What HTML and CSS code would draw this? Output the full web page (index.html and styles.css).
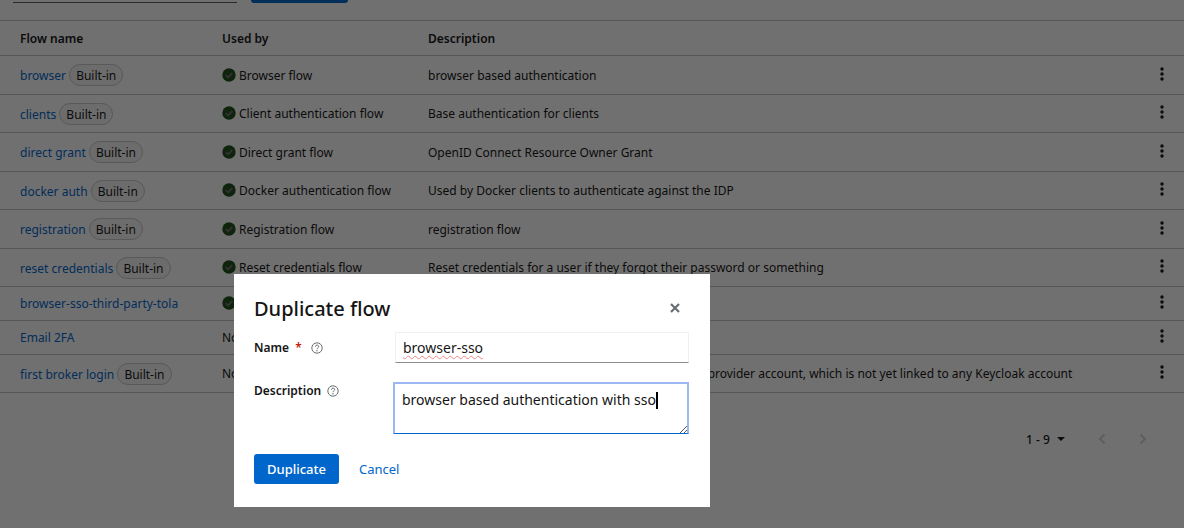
FILE: index.html
```html
<!DOCTYPE html>
<html lang="en">
<head>
    <meta charset="UTF-8">
    <meta name="viewport" content="width=device-width, initial-scale=1.0">
    <title>Authentication flows</title>
    <link rel="stylesheet" href="styles.css">
</head>
<body>
    <svg class="icon-defs" width="0" height="0">
        <symbol id="check" viewBox="0 0 14 14">
            <circle cx="7" cy="7" r="6.7" fill="#1e4f18"/>
            <path d="M3.8 7.2l2.3 2.3 4.2-4.4" fill="none" stroke="#6f6f6f" stroke-width="1.9"/>
        </symbol>
        <symbol id="kebab" viewBox="0 0 4 14">
            <circle cx="2" cy="2" r="1.7"/>
            <circle cx="2" cy="7" r="1.7"/>
            <circle cx="2" cy="12" r="1.7"/>
        </symbol>
        <symbol id="help" viewBox="0 0 12 12">
            <circle cx="6" cy="6" r="5.2" fill="none" stroke="currentColor" stroke-width="1"/>
            <path d="M4.4 4.7c0-2.1 3.3-2.1 3.3-.1 0 1.3-1.7 1.2-1.7 2.6" fill="none" stroke="currentColor" stroke-width="1"/>
            <circle cx="6" cy="8.8" r=".7" fill="currentColor"/>
        </symbol>
    </svg>

    <div class="toolbar">
        <div class="search"></div>
        <div class="create"></div>
    </div>

    <table class="flows">
        <thead>
            <tr>
                <th class="col-name">Flow name</th>
                <th class="col-used">Used by</th>
                <th>Description</th>
                <th class="col-action"></th>
            </tr>
        </thead>
        <tbody>
            <tr class="r39">
                <td><a href="#">browser</a> <span class="pill">Built-in</span></td>
                <td><svg class="check"><use href="#check"/></svg>Browser flow</td>
                <td>browser based authentication</td>
                <td class="col-action"><svg class="kebab"><use href="#kebab"/></svg></td>
            </tr>
            <tr class="r38">
                <td><a href="#">clients</a> <span class="pill">Built-in</span></td>
                <td><svg class="check"><use href="#check"/></svg>Client authentication flow</td>
                <td>Base authentication for clients</td>
                <td class="col-action"><svg class="kebab"><use href="#kebab"/></svg></td>
            </tr>
            <tr class="r39">
                <td><a href="#">direct grant</a> <span class="pill">Built-in</span></td>
                <td><svg class="check"><use href="#check"/></svg>Direct grant flow</td>
                <td>OpenID Connect Resource Owner Grant</td>
                <td class="col-action"><svg class="kebab"><use href="#kebab"/></svg></td>
            </tr>
            <tr class="r38">
                <td><a href="#">docker auth</a> <span class="pill">Built-in</span></td>
                <td><svg class="check"><use href="#check"/></svg>Docker authentication flow</td>
                <td>Used by Docker clients to authenticate against the IDP</td>
                <td class="col-action"><svg class="kebab"><use href="#kebab"/></svg></td>
            </tr>
            <tr class="r39">
                <td><a href="#">registration</a> <span class="pill">Built-in</span></td>
                <td><svg class="check"><use href="#check"/></svg>Registration flow</td>
                <td>registration flow</td>
                <td class="col-action"><svg class="kebab"><use href="#kebab"/></svg></td>
            </tr>
            <tr class="r38">
                <td><a href="#">reset credentials</a> <span class="pill">Built-in</span></td>
                <td><svg class="check"><use href="#check"/></svg>Reset credentials flow</td>
                <td>Reset credentials for a user if they forgot their password or something</td>
                <td class="col-action"><svg class="kebab"><use href="#kebab"/></svg></td>
            </tr>
            <tr class="r34">
                <td><a href="#">browser-sso-third-party-tola</a></td>
                <td><svg class="check"><use href="#check"/></svg>Browser flow</td>
                <td>browser based authentication</td>
                <td class="col-action"><svg class="kebab"><use href="#kebab"/></svg></td>
            </tr>
            <tr class="r34">
                <td><a href="#">Email 2FA</a></td>
                <td>Not in use</td>
                <td>Email based second factor</td>
                <td class="col-action"><svg class="kebab"><use href="#kebab"/></svg></td>
            </tr>
            <tr class="r38">
                <td><a href="#">first broker login</a> <span class="pill">Built-in</span></td>
                <td>Not in use</td>
                <td>Actions taken after first broker login with identity provider account, which is not yet linked to any Keycloak account</td>
                <td class="col-action"><svg class="kebab"><use href="#kebab"/></svg></td>
            </tr>
        </tbody>
    </table>

    <div class="pager">
        <span class="pager-count">1 - 9</span>
        <span class="caret"></span>
        <svg class="chev" viewBox="0 0 8 12"><path d="M6.5 1.5L2 6l4.5 4.5"/></svg>
        <svg class="chev" viewBox="0 0 8 12"><path d="M1.5 1.5L6 6l-4.5 4.5"/></svg>
    </div>

    <div class="backdrop">
        <div class="modal">
            <div class="modal-head">
                <h1>Duplicate flow</h1>
                <svg class="close" viewBox="0 0 10 10"><path d="M1 1l8 8M9 1l-8 8"/></svg>
            </div>
            <div class="field field-name">
                <label>Name <span class="req">*</span> <svg class="help"><use href="#help"/></svg></label>
                <div class="input"><span class="squiggle">browser-sso</span></div>
            </div>
            <div class="field field-desc">
                <label>Description <svg class="help"><use href="#help"/></svg></label>
                <div class="textarea">browser based authentication with sso<span class="cursor"></span>
                    <svg class="grip" viewBox="0 0 8 8"><path d="M8 1L1 8M8 5L5 8"/></svg>
                </div>
            </div>
            <div class="actions">
                <button class="btn-primary">Duplicate</button>
                <a class="btn-link" href="#">Cancel</a>
            </div>
        </div>
    </div>
</body>
</html>
```

FILE: styles.css
```css
html, body {
    height: 100%;
}
body {
    margin: 0;
    background: #fff;
    color: #151515;
    font-family: "Noto Sans", Arial, sans-serif;
    font-size: 12px;
    overflow: hidden;
}
.icon-defs {
    display: block;
    height: 0;
}
.toolbar {
    height: 21px;
    box-sizing: border-box;
    border-bottom: 1px solid #c4c4c4;
    display: flex;
    align-items: flex-start;
    padding-left: 13px;
}
.search {
    width: 224px;
    height: 3px;
    box-sizing: border-box;
    border-bottom: 1px solid #5a5a5a;
    margin-top: 0;
    position: relative;
}
.search::after {
    content: "";
    display: block;
    width: 196px;
    height: 2px;
}
.create {
    width: 97px;
    height: 3px;
    margin-left: 14px;
    background: #0066cc;
    border-radius: 0 0 3px 3px;
}
.flows {
    width: 100%;
    border-collapse: collapse;
    table-layout: fixed;
}
.flows th {
    height: 34px;
    padding: 0;
    text-align: left;
    font-weight: 600;
    border-bottom: 1px solid #c4c4c4;
}
.flows td {
    padding: 0;
    border-bottom: 1px solid #c4c4c4;
    white-space: nowrap;
}
.col-name {
    width: 202px;
    padding-left: 20px !important;
}
.col-used {
    width: 206px;
}
.col-action {
    width: 28px;
}
.flows td:first-child {
    padding-left: 20px;
}
.r39 {
    height: 39px;
}
.r38 {
    height: 38px;
}
.r34 {
    height: 34px;
}
.flows a {
    color: #0066cc;
    text-decoration: none;
}
.pill {
    display: inline-block;
    height: 22px;
    line-height: 21px;
    box-sizing: border-box;
    padding: 0 6px;
    border: 1px solid #c9c9c9;
    border-radius: 12px;
    background: #f5f5f5;
    color: #151515;
    margin-left: 0;
}
.check {
    width: 14px;
    height: 14px;
    margin-right: 3px;
    vertical-align: -2px;
}
.kebab {
    width: 4px;
    height: 14px;
    fill: #151515;
    display: block;
    margin: -3px 0 0 4px;
}
.pager {
    display: flex;
    align-items: center;
    margin-top: 37px;
    padding-left: 1026px;
    height: 18px;
}
.pager-count {
    width: 31px;
    color: #151515;
    font-weight: 500;
}
.caret {
    width: 0;
    height: 0;
    border: 4px solid transparent;
    border-top: 4px solid #151515;
    border-bottom: 0;
    margin-right: 33px;
}
.chev {
    width: 8px;
    height: 12px;
    fill: none;
    stroke: #d2d2d2;
    stroke-width: 2;
    margin-right: 33px;
}
.backdrop {
    position: fixed;
    inset: 0;
    background: rgba(3, 3, 3, 0.57);
    padding: 274px 0 0 234px;
    box-sizing: border-box;
}
.modal {
    width: 476px;
    height: 233px;
    background: #fff;
    box-sizing: border-box;
    padding: 20px;
    display: flex;
    flex-direction: column;
}
.modal-head {
    display: flex;
    justify-content: space-between;
    align-items: center;
    height: 28px;
}
.modal-head h1 {
    margin: 0;
    font-size: 20px;
    font-weight: 500;
    color: #151515;
}
.close {
    width: 10px;
    height: 10px;
    margin-right: 10px;
    stroke: #6a6e73;
    stroke-width: 2.2;
}
.field {
    display: flex;
}
.field label {
    width: 141px;
    font-weight: 600;
    flex: none;
}
.field-name {
    margin-top: 10px;
    align-items: center;
}
.field-desc {
    margin-top: 19px;
}
.req {
    color: #c9190b;
    margin: 0 3px;
}
.help {
    width: 12px;
    height: 12px;
    color: #6a6e73;
    margin-left: 3px;
    vertical-align: -2px;
}
.input {
    width: 294px;
    height: 31px;
    box-sizing: border-box;
    border: 1px solid #f0f0f0;
    border-bottom-color: #8a8d90;
    padding: 0 7px;
    line-height: 29px;
    font-size: 14px;
    color: #151515;
}
.squiggle {
    text-decoration: underline wavy #e88;
    text-decoration-thickness: 1px;
    text-underline-offset: 2px;
    text-decoration-skip-ink: none;
}
.textarea {
    position: relative;
    width: 296px;
    height: 52px;
    margin-left: -2px;
    box-sizing: border-box;
    border: 2px solid #9db7f5;
    border-bottom-color: #0066cc;
    border-bottom-width: 1px;
    padding: 6px 7px;
    font-size: 14px;
    line-height: 20px;
    color: #151515;
}
.cursor {
    display: inline-block;
    width: 2px;
    height: 17px;
    background: #000;
    vertical-align: -4px;
}
.grip {
    position: absolute;
    right: 0;
    bottom: 0;
    width: 8px;
    height: 8px;
    stroke: #555;
    stroke-width: 1;
}
.actions {
    display: flex;
    align-items: center;
    margin-top: 20px;
}
.btn-primary {
    width: 85px;
    height: 30px;
    border: none;
    border-radius: 3px;
    background: #0066cc;
    color: #fff;
    font-family: inherit;
    font-size: 13px;
    font-weight: 500;
}
.btn-link {
    margin-left: 20px;
    color: #0066cc;
    font-size: 13px;
    text-decoration: none;
}
```
